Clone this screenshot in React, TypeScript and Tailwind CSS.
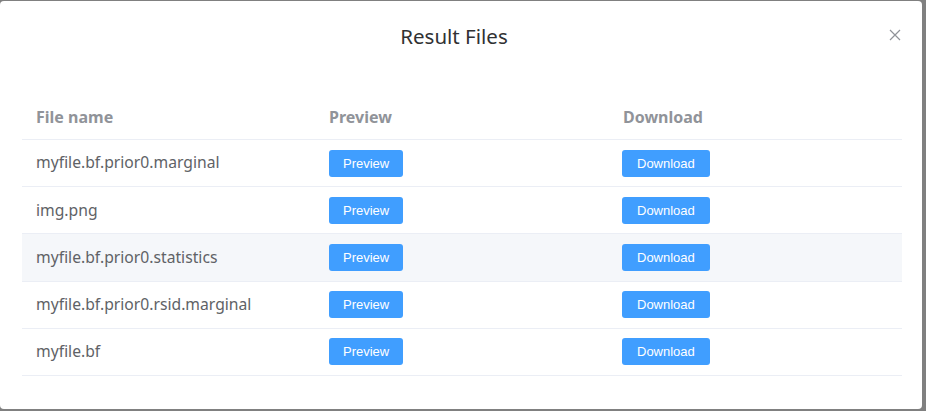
import React from 'react';

const files = [
  'myfile.bf.prior0.marginal',
  'img.png',
  'myfile.bf.prior0.statistics',
  'myfile.bf.prior0.rsid.marginal',
  'myfile.bf',
];

const Btn: React.FC<{ label: string; wide?: boolean }> = ({ label, wide }) => (
  <button
    className={`h-[27px] ${wide ? 'px-[15px]' : 'px-[14px]'} rounded-[3px] bg-[#409eff] text-white text-[13px] leading-none font-['Liberation_Sans',Arial,sans-serif]`}
  >
    {label}
  </button>
);

export default function App() {
  return (
    <div className="w-[926px] h-[411px] bg-[#808080] overflow-hidden pt-px">
      <div className="w-[922px] h-[408px] bg-white rounded-[4px] font-['Noto_Sans',sans-serif] flex flex-col">
        {/* Header */}
        <div className="relative h-[94px] pt-[21px] pr-[14px] text-center">
          <span className="text-[20.5px] leading-[28px] text-[#303133]">Result Files</span>
          <button className="absolute right-[20px] top-[27px] w-[14px] h-[14px] text-[#909399]">
            <svg viewBox="0 0 14 14" className="w-[14px] h-[14px]" fill="none" stroke="currentColor" strokeWidth="1.2">
              <path d="M2 2 L12 12 M12 2 L2 12" />
            </svg>
          </button>
        </div>

        {/* Table */}
        <div className="pl-[22px] pr-[20px]">
          <div className="grid grid-cols-[294px_294px_1fr] h-[45px] items-center border-b border-[#ebeef5] text-[16px] font-bold text-[#909399]">
            <div className="pl-[14px]">File name</div>
            <div className="pl-[13px]">Preview</div>
            <div className="pl-[13px]">Download</div>
          </div>
          {files.map((f, i) => (
            <div
              key={f}
              className={`grid grid-cols-[294px_294px_1fr] h-[47.2px] items-center border-b border-[#ebeef5] text-[15.7px] text-[#606266] ${i === 2 ? 'bg-[#f5f7fa]' : ''}`}
            >
              <div className="pl-[14px]">{f}</div>
              <div className="pl-[13px]">
                <Btn label="Preview" />
              </div>
              <div className="pl-[12px]">
                <Btn label="Download" wide />
              </div>
            </div>
          ))}
        </div>
      </div>
    </div>
  );
}
